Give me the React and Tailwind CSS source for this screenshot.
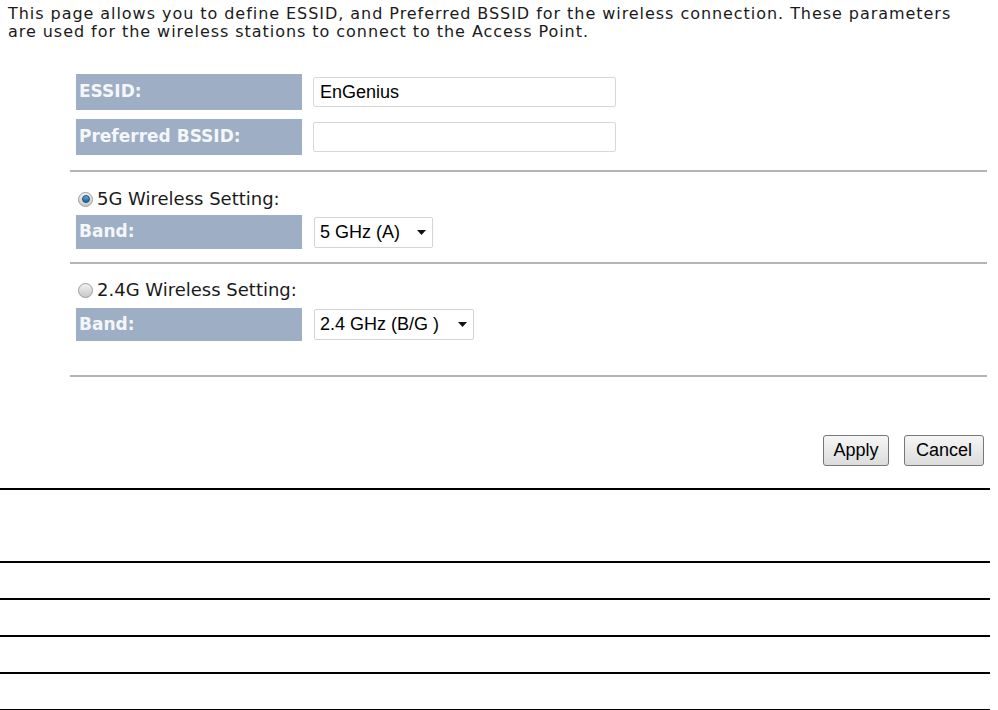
import React from "react";

const Label = ({ children, height = "h-[36px]" }) => (
	<div className={`w-[226px] ${height} bg-[#9eaec4] flex items-center pl-[3px] text-[17px] font-bold text-[#f4f6fa] font-['DejaVu_Sans',Verdana,sans-serif]`}>
		{children}
	</div>
);

const TextBox = ({ value }) => (
	<div className="ml-[11px] w-[303px] h-[30px] border border-[#d8d8d8] rounded-[2px] bg-white flex items-center px-[6px] text-[18px] text-black font-['Liberation_Sans',Arial,sans-serif]">
		{value}
	</div>
);

const Select = ({ value, width }) => (
	<div className={`ml-[12px] h-[31px] border border-[#d4d4d4] rounded-[2px] bg-white flex items-center justify-between pl-[5px] pr-[6px] text-[18px] text-black font-['Liberation_Sans',Arial,sans-serif] ${width}`}>
		<span>{value}</span>
		<svg width="9" height="5" viewBox="0 0 9 5">
			<path d="M0 0 L9 0 L4.5 5 Z" fill="#111" />
		</svg>
	</div>
);

const Radio = ({ checked }) => (
	<span className="w-[15px] h-[15px] rounded-full border border-[#9a9a9a] bg-gradient-to-b from-[#f2f2f2] to-[#c8c8c8] flex items-center justify-center">
		{checked && <span className="w-[8px] h-[8px] rounded-full bg-gradient-to-b from-[#5fb3e8] to-[#1d5f96] border border-[#1c4a72]" />}
	</span>
);

const Divider = () => <div className="h-[2px] bg-[#b4b4b4] w-[917px]" />;

const Button = ({ children, width }) => (
	<button className={`h-[31px] ${width} border border-[#777] rounded-[3px] bg-gradient-to-b from-[#f6f6f6] to-[#dcdcdc] text-[18px] text-black font-['Liberation_Sans',Arial,sans-serif]`}>
		{children}
	</button>
);

export default function App() {
	return (
		<div className="w-[998px] h-[710px] bg-white overflow-hidden text-[#1a1a1a] font-['DejaVu_Sans',Verdana,sans-serif]">
			<p className="pl-[8px] pt-[5px] text-[16px] leading-[18px] tracking-[0.95px] whitespace-nowrap">
				This page allows you to define ESSID, and Preferred BSSID for the wireless connection. These parameters
				<br />
				are used for the wireless stations to connect to the Access Point.
			</p>

			<div className="ml-[70px] mt-[33px]">
				<div className="pl-[6px] flex flex-col gap-[9px]">
					<div className="flex items-center">
						<Label>ESSID:</Label>
						<TextBox value="EnGenius" />
					</div>
					<div className="flex items-center">
						<Label>Preferred BSSID:</Label>
						<TextBox value="" />
					</div>
				</div>

				<div className="mt-[15px]">
					<Divider />
				</div>

				<div className="pl-[8px] mt-[17px] flex items-center gap-[4px] text-[18px] leading-[20px]">
					<Radio checked />
					<span>5G Wireless Setting:</span>
				</div>
				<div className="pl-[6px] mt-[6px] flex items-center">
					<Label height="h-[34px]">Band:</Label>
					<Select value="5 GHz (A)" width="w-[119px]" />
				</div>

				<div className="mt-[13px]">
					<Divider />
				</div>

				<div className="pl-[8px] mt-[16px] flex items-center gap-[4px] text-[18px] leading-[20px]">
					<Radio />
					<span>2.4G Wireless Setting:</span>
				</div>
				<div className="pl-[6px] mt-[8px] flex items-center">
					<Label height="h-[33px]">Band:</Label>
					<Select value="2.4 GHz (B/G )" width="w-[160px]" />
				</div>

				<div className="mt-[34px]">
					<Divider />
				</div>
			</div>

			<div className="flex justify-end gap-[15px] pr-[14px] mt-[58px]">
				<Button width="w-[66px]">Apply</Button>
				<Button width="w-[80px]">Cancel</Button>
			</div>

			<div className="w-[990px] mt-[22px]">
				<div className="h-[2px] bg-black" />
				<div className="h-[71px]" />
				<div className="h-[2px] bg-black" />
				<div className="h-[35px]" />
				<div className="h-[2px] bg-black" />
				<div className="h-[35px]" />
				<div className="h-[2px] bg-black" />
				<div className="h-[35px]" />
				<div className="h-[2px] bg-black" />
				<div className="h-[35px]" />
				<div className="h-[2px] bg-black" />
			</div>
		</div>
	);
}
